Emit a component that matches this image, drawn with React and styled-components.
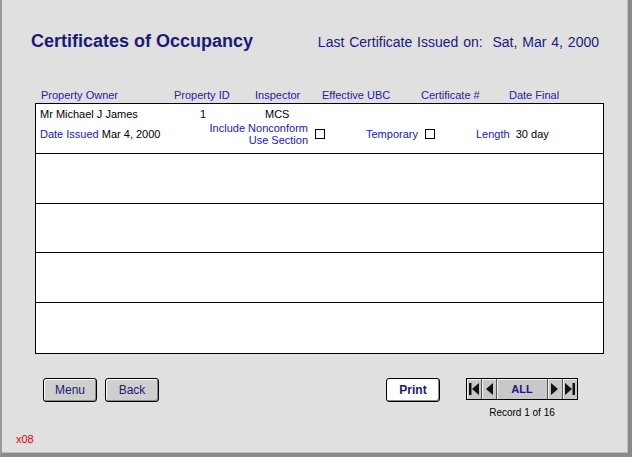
import React from 'react';
import styled, { createGlobalStyle } from 'styled-components';

const Global = createGlobalStyle`
  html, body { margin: 0; padding: 0; background: #e0e0e0; }
  body { font-family: Arial, "Liberation Sans", sans-serif; }
`;

const Frame = styled.div`
  width: 632px;
  height: 457px;
  box-sizing: border-box;
  background: #e0e0e0;
  border-right: 4px solid #8a8a8a;
  border-bottom: 4px solid #8a8a8a;
  border-left: 2px solid #9a9a9a;
  box-shadow: inset -1px -1px 0 #bdbdbd;
  position: relative;
  display: flex;
  flex-direction: column;
  padding: 31px 0 0 29px;
`;

const TitleRow = styled.div`
  display: flex;
  align-items: baseline;
  justify-content: space-between;
  width: 568px;
`;

const Title = styled.h1`
  margin: 0;
  color: #1a1a7a;
  font-size: 18px;
  font-weight: bold;
`;

const LastIssued = styled.div`
  color: #1a1a7a;
  font-size: 14px;
  word-spacing: 1px;
`;

const Headers = styled.div`
  display: grid;
  grid-template-columns: 133px 81px 67px 99px 88px 80px;
  margin: 37px 0 0 10px;
  font-size: 11px;
  color: #2020b0;
  height: 14px;
`;

const Table = styled.div`
  width: 569px;
  height: 251px;
  box-sizing: border-box;
  margin: 0 0 0 4px;
  background: #fff;
  border: 1px solid #000;
  display: flex;
  flex-direction: column;
`;

const Row = styled.div`
  height: 50px;
  box-sizing: border-box;
  border-bottom: ${p => (p.$last ? 'none' : '1px solid #000')};
  font-size: 11px;
  padding: 3px 4px 0;
`;

const Line = styled.div`
  display: flex;
  align-items: center;
  height: ${p => p.$h || 14}px;
`;

const Cell = styled.span`
  width: ${p => (p.$w ? `${p.$w}px` : 'auto')};
  flex: none;
  color: ${p => (p.$label ? '#2020b0' : '#000')};
  text-align: ${p => p.$align || 'left'};
  margin-left: ${p => p.$ml || 0}px;
`;

const Value = styled.span`color: #000;`;

const Box = styled.span`
  display: inline-block;
  width: 8px;
  height: 8px;
  border: 1px solid #000;
  margin: 0 0 0 7px;
`;

const Footer = styled.div`
  display: flex;
  align-items: flex-start;
  margin: 24px 0 0 12px;
  width: 535px;
`;

const Button = styled.button`
  height: 24px;
  width: ${p => p.$w}px;
  margin-right: 8px;
  box-sizing: border-box;
  border: 1px solid #000;
  border-radius: 3px;
  background: ${p => (p.$white ? '#fff' : '#cfcfcf')};
  box-shadow: inset -1px -1px 0 #888, inset 1px 1px 0 #fff;
  color: #1a1a7a;
  font-family: inherit;
  font-size: 12px;
  font-weight: ${p => (p.$white ? 'bold' : 'normal')};
  padding: 0;
`;

const Spacer = styled.div`flex: 1;`;

const NavWrap = styled.div`
  display: flex;
  flex-direction: column;
  align-items: center;
  margin-left: 18px;
`;

const Nav = styled.div`
  display: flex;
  border: 1px solid #000;
  height: 20px;
  background: #c8c8c8;
`;

const NavBtn = styled.div`
  width: ${p => p.$w || 14}px;
  border-right: ${p => (p.$end ? 'none' : '1px solid #555')};
  display: flex;
  align-items: center;
  justify-content: center;
  color: #1a1a7a;
  font-weight: bold;
  font-size: 11px;
  box-shadow: inset 1px 1px 0 #f0f0f0;
`;

const Record = styled.div`
  font-size: 10px;
  margin-top: 7px;
  color: #000;
`;

const Tag = styled.div`
  position: absolute;
  left: 14px;
  bottom: 8px;
  color: #e00000;
  font-size: 11px;
`;

const Tri = ({ dir, bar }) => (
  <svg width="12" height="16" viewBox="0 0 12 16">
    {dir === 'l' ? (
      <>
        {bar && <rect x="1" y="2" width="2.5" height="12" fill="#111" />}
        <polygon points={bar ? '11,2 4,8 11,14' : '10,2 3,8 10,14'} fill="#111" />
      </>
    ) : (
      <>
        <polygon points={bar ? '1,2 8,8 1,14' : '2,2 9,8 2,14'} fill="#111" />
        {bar && <rect x="8.5" y="2" width="2.5" height="12" fill="#111" />}
      </>
    )}
  </svg>
);

export default function App() {
  const empty = [1, 2, 3, 4];
  return (
    <Frame>
      <Global />
      <TitleRow>
        <Title>Certificates of Occupancy</Title>
        <LastIssued>Last Certificate Issued on:&nbsp; Sat, Mar 4, 2000</LastIssued>
      </TitleRow>
      <Headers>
        <span>Property Owner</span>
        <span>Property ID</span>
        <span>Inspector</span>
        <span>Effective UBC</span>
        <span>Certificate #</span>
        <span>Date Final</span>
      </Headers>
      <Table>
        <Row>
          <Line>
            <Cell $w={160}>Mr Michael J James</Cell>
            <Cell $w={65}>1</Cell>
            <Cell $w={60}>MCS</Cell>
          </Line>
          <Line $h={26}>
            <Cell $w={160} $label>Date Issued <Value>Mar 4, 2000</Value></Cell>
            <Cell $w={108} $label $align="right">Include Nonconform<br />Use Section</Cell>
            <Box />
            <Cell $label $ml={41}>Temporary</Cell>
            <Box />
            <Cell $label $ml={41}>Length <Value>&nbsp;30 day</Value></Cell>
          </Line>
        </Row>
        {empty.map(i => <Row key={i} $last={i === 4} />)}
      </Table>
      <Footer>
        <Button $w={54}>Menu</Button>
        <Button $w={54}>Back</Button>
        <Spacer />
        <Button $w={54} $white>Print</Button>
        <NavWrap>
          <Nav>
            <NavBtn><Tri dir="l" bar /></NavBtn>
            <NavBtn><Tri dir="l" /></NavBtn>
            <NavBtn $w={50}>ALL</NavBtn>
            <NavBtn><Tri dir="r" /></NavBtn>
            <NavBtn $end><Tri dir="r" bar /></NavBtn>
          </Nav>
          <Record>Record 1 of 16</Record>
        </NavWrap>
      </Footer>
      <Tag>x08</Tag>
    </Frame>
  );
}
